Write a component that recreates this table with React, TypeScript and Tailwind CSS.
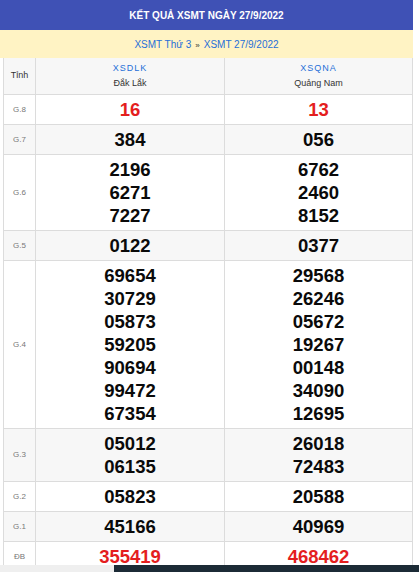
import React from "react";

type Row = { label: string; a: string[]; b: string[]; red?: boolean };

const rows: Row[] = [
  { label: "G.8", a: ["16"], b: ["13"], red: true },
  { label: "G.7", a: ["384"], b: ["056"] },
  { label: "G.6", a: ["2196", "6271", "7227"], b: ["6762", "2460", "8152"] },
  { label: "G.5", a: ["0122"], b: ["0377"] },
  {
    label: "G.4",
    a: ["69654", "30729", "05873", "59205", "90694", "99472", "67354"],
    b: ["29568", "26246", "05672", "19267", "00148", "34090", "12695"],
  },
  { label: "G.3", a: ["05012", "06135"], b: ["26018", "72483"] },
  { label: "G.2", a: ["05823"], b: ["20588"] },
  { label: "G.1", a: ["45166"], b: ["40969"] },
  { label: "ĐB", a: ["355419"], b: ["468462"], red: true },
];

function Nums({ list, red }: { list: string[]; red?: boolean }) {
  return (
    <div
      className={
        "flex flex-col items-center py-[3px] text-[18.5px] leading-[23px] font-bold " +
        (red ? "text-[#e41e1e]" : "text-[#0a0a0a]")
      }
    >
      {list.map((n, i) => (
        <span key={i}>{n}</span>
      ))}
    </div>
  );
}

export default function App() {
  return (
    <div
      className="w-[419px] h-[572px] bg-white flex flex-col overflow-hidden"
      style={{ fontFamily: '"Liberation Sans", Arial, sans-serif' }}
    >
      <div className="flex-1 overflow-hidden">
        <div className="w-[413px]">
          <div className="h-[30px] bg-[#3f51b5] flex items-center justify-center text-white text-[10px] font-bold">
            KẾT QUẢ XSMT NGÀY 27/9/2022
          </div>
          <div className="h-[28px] bg-[#fff3c4] flex items-center justify-center text-[10px] text-[#1f6fd8] gap-[4px]">
            <span>XSMT Thứ 3</span>
            <span className="text-[8px] text-[#333] mt-[3px]">»</span>
            <span>XSMT 27/9/2022</span>
          </div>
          <div className="ml-[3px] w-[410px] border-l border-r border-[#dcdcdc]">
            <div className="flex h-[37px] border-b border-[#dcdcdc] bg-[#f7f7f7]">
              <div className="w-[32px] border-r border-[#dcdcdc] flex items-center justify-center text-[9px] text-[#333]">
                Tỉnh
              </div>
              <div className="w-[189px] border-r border-[#dcdcdc] flex flex-col items-center justify-center text-[9px] leading-[15px]">
                <span className="text-[#1f6fd8] tracking-[1px]">XSDLK</span>
                <span className="text-[#333]">Đắk Lắk</span>
              </div>
              <div className="flex-1 flex flex-col items-center justify-center text-[9px] leading-[15px]">
                <span className="text-[#1f6fd8] tracking-[1px]">XSQNA</span>
                <span className="text-[#333]">Quảng Nam</span>
              </div>
            </div>
            {rows.map((r, i) => (
              <div
                key={r.label}
                className={
                  "flex border-b border-[#dcdcdc] " + (i % 2 === 1 ? "bg-[#f7f7f7]" : "bg-white")
                }
              >
                <div className="w-[32px] border-r border-[#dcdcdc] flex items-center justify-center text-[8px] text-[#777]">
                  {r.label}
                </div>
                <div className="w-[189px] border-r border-[#dcdcdc]">
                  <Nums list={r.a} red={r.red} />
                </div>
                <div className="flex-1">
                  <Nums list={r.b} red={r.red} />
                </div>
              </div>
            ))}
          </div>
        </div>
      </div>
      <div className="h-[7px] flex shrink-0">
        <div className="w-[114px] bg-[#efefef]" />
        <div className="flex-1 bg-[#1c2b36]" />
      </div>
    </div>
  );
}
